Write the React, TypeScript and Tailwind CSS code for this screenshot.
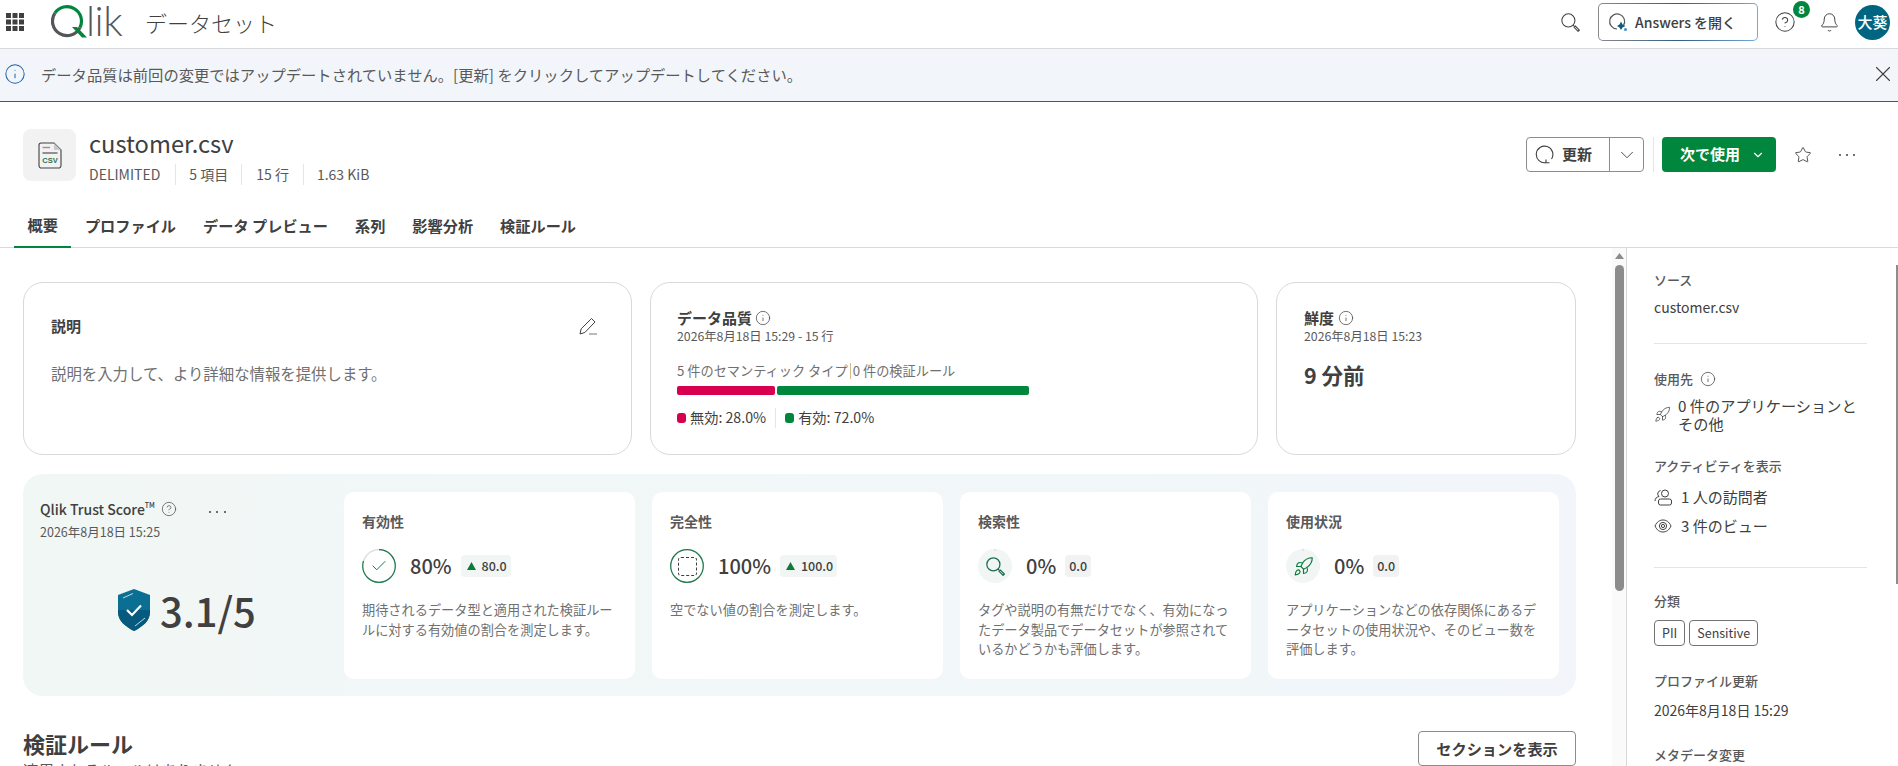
import { Bell, Check, ChevronDown, CircleHelp, Info, Rocket, Star, X } from 'lucide-react'

const tabs = ['概要', 'プロファイル', 'データ プレビュー', '系列', '影響分析', '検証ルール']

const metrics = [
  {
    title: '有効性',
    value: '80%',
    delta: '80.0',
    up: true,
    icon: 'check',
    desc: '期待されるデータ型と適用された検証ルールに対する有効値の割合を測定します。',
  },
  {
    title: '完全性',
    value: '100%',
    delta: '100.0',
    up: true,
    icon: 'dash',
    desc: '空でない値の割合を測定します。',
  },
  {
    title: '検索性',
    value: '0%',
    delta: '0.0',
    up: false,
    icon: 'search',
    desc: 'タグや説明の有無だけでなく、有効になったデータ製品でデータセットが参照されているかどうかも評価します。',
  },
  {
    title: '使用状況',
    value: '0%',
    delta: '0.0',
    up: false,
    icon: 'rocket',
    desc: 'アプリケーションなどの依存関係にあるデータセットの使用状況や、そのビュー数を評価します。',
  },
]

function GridIcon() {
  return (
    <svg width="18" height="18" viewBox="0 0 18 18" fill="#404040">
      <rect x="0" y="0" width="5" height="5" />
      <rect x="6.5" y="0" width="5" height="5" />
      <rect x="13" y="0" width="5" height="5" />
      <rect x="0" y="6.5" width="5" height="5" />
      <rect x="6.5" y="6.5" width="5" height="5" />
      <rect x="13" y="6.5" width="5" height="5" />
      <rect x="0" y="13" width="5" height="5" />
      <rect x="6.5" y="13" width="5" height="5" />
      <rect x="13" y="13" width="5" height="5" />
    </svg>
  )
}

function QlikLogo() {
  return (
    <svg width="76" height="33" viewBox="0 0 76 33" fill="none" className="-mt-[2px]">
      <path d="M3.9 8.1 A14.5 14.5 0 0 1 29 22.5" stroke="#00873d" strokeWidth="3.2" />
      <path d="M3.9 8.1 A14.5 14.5 0 1 0 29 22.5" stroke="#54565a" strokeWidth="3.2" />
      <path d="M21 22 L31 32.5 L36 32.5 L26 22 Z" fill="#00873d" />
      <text x="35" y="30.5" fontSize="41" fontWeight="300" letterSpacing="-0.5" fill="#54565a" fontFamily="Lato, sans-serif">lik</text>
    </svg>
  )
}

function SearchGlyph({ size, color, width }: { size: number; color: string; width: number }) {
  return (
    <svg width={size} height={size} viewBox="0 0 18 18" fill="none" stroke={color} strokeWidth={width}>
      <circle cx="7" cy="7" r="6.2" />
      <path d="M11.5 11.5 L12.6 12.6" />
      <path d="M12.4 13.6 L13.6 12.4 L17.4 16.2 L16.2 17.4 Z" />
    </svg>
  )
}

function AnswersIcon() {
  return (
    <svg width="20" height="20" viewBox="0 0 20 20" fill="none">
      <path d="M15.5 13.5 A7.5 7.5 0 1 0 9 17" stroke="#595959" strokeWidth="1.2" />
      <path d="M13 9.5 L14.5 12.5 L17.5 14 L14.5 15.5 L13 18 L11.5 15.5 L9 14 L11.5 12.5 Z" fill="#0f5c7a" />
      <circle cx="17.5" cy="17.5" r="1.5" fill="#3d8fd1" />
    </svg>
  )
}

function RefreshIcon() {
  return (
    <svg width="19" height="19" viewBox="0 0 19 19" fill="none" stroke="#404040" strokeWidth="1.1">
      <path d="M11 17.6 A8.3 8.3 0 1 1 16.5 14" />
      <path d="M11 14.5 L11 17.8 L14.5 17.8" />
    </svg>
  )
}

function CsvIcon() {
  return (
    <svg width="24" height="27" viewBox="0 0 24 27" fill="none">
      <path d="M3 1 H16 L23 8 V23.5 A2.5 2.5 0 0 1 20.5 26 H3.5 A2.5 2.5 0 0 1 1 23.5 V3 A2 2 0 0 1 3 1 Z" stroke="#404040" strokeWidth="1.1" />
      <path d="M16 1 V8 H23 Z" fill="#c8c8c8" />
      <path d="M4.5 5.5 H12" stroke="#a08a96" strokeWidth="1.4" />
      <path d="M4.5 11 H19.5" stroke="#404040" strokeWidth="1.1" />
      <text x="12" y="21" textAnchor="middle" fontSize="7.5" fontWeight="700" fill="#2f6f55" fontFamily="'Liberation Sans', sans-serif">CSV</text>
    </svg>
  )
}

function PencilIcon() {
  return (
    <svg width="18" height="18" viewBox="0 0 18 18" fill="none" stroke="#404040" strokeWidth="1">
      <path d="M1 17 L2.2 11.8 L12.5 1.5 L16 5 L5.8 15.5 Z" />
      <path d="M10 17 H18" stroke="#8c8c8c" strokeWidth="1.2" />
    </svg>
  )
}

function Shield() {
  return (
    <svg width="32" height="42" viewBox="0 0 32 42">
      <path d="M16 0 L32 6 V23 C32 32 24 38 16 42 C8 38 0 32 0 23 V6 Z" fill="#0a6f93" />
      <path d="M0 21 H32 V23 C32 32 24 38 16 42 C8 38 0 32 0 23 Z" fill="#075a7d" />
      <path d="M9 21 L14 26 L23 16.5" stroke="#fff" strokeWidth="2.2" fill="none" />
      <path d="M5 9 L15 4.5" stroke="#b9dbe7" strokeWidth="1" />
      <path d="M17 37 L27 29" stroke="#b9dbe7" strokeWidth="1" />
    </svg>
  )
}

function MetricIcon({ kind, value }: { kind: string; value: string }) {
  const pct = parseInt(value)
  return (
    <div className="relative w-[34px] h-[34px] shrink-0">
      <svg width="34" height="34" viewBox="0 0 34 34" fill="none" className="absolute inset-0">
        {pct === 0 ? (
          <>
            <circle cx="17" cy="17" r="17" fill="#f1f5f4" />
            <path d="M17 0 V2" stroke="#bdbdbd" strokeWidth="0.6" />
          </>
        ) : (
          <>
            <circle cx="17" cy="17" r="16.3" stroke="#d5dedb" strokeWidth="1.2" />
            <circle
              cx="17"
              cy="17"
              r="16.3"
              stroke="#1c7a4c"
              strokeWidth="1.2"
              pathLength={100}
              strokeDasharray={`${pct} ${100 - pct}`}
              transform="rotate(-90 17 17)"
            />
          </>
        )}
      </svg>
      <div className="absolute inset-0 flex items-center justify-center">
        {kind === 'check' && <Check size={18} strokeWidth={1.3} color="#0b7a3a" />}
        {kind === 'dash' && <div className="w-[19px] h-[19px] rounded-[3px] border border-dashed border-[#404040]" />}
        {kind === 'search' && <SearchGlyph size={19} color="#1c6b52" width={1.2} />}
        {kind === 'rocket' && <Rocket size={21} strokeWidth={1.3} color="#0b7a3a" />}
      </div>
    </div>
  )
}

function MetricCard({ m }: { m: (typeof metrics)[number] }) {
  return (
    <div className="w-[291px] h-[187px] bg-white rounded-[10px] pt-[19px] px-[18px]">
      <div className="text-[14px] leading-5 font-bold text-[#595959]">{m.title}</div>
      <div className="flex items-center mt-[18px] h-[34px]">
        <MetricIcon kind={m.icon} value={m.value} />
        <span className="ml-[14px] text-[20px] leading-7 font-medium text-[#404040]">{m.value}</span>
        <span className={`ml-[9px] h-[22px] rounded-[4px] flex items-center gap-[6px] text-[12.5px] font-medium text-[#404040] ${m.up ? 'bg-[#f1f5f4] pl-[6px] pr-[4px]' : 'bg-[#f2f2f2] px-[4px]'}`}>
          {m.up && (
            <svg width="9" height="8" viewBox="0 0 9 8">
              <path d="M4.5 0 L9 8 H0 Z" fill="#0b7a3a" />
            </svg>
          )}
          {m.delta}
        </span>
      </div>
      <p className="mt-[17px] text-[13.2px] leading-[19.5px] text-[#707070]">{m.desc}</p>
    </div>
  )
}

function VisitorIcon() {
  return (
    <svg width="18" height="18" viewBox="0 0 18 18" fill="none" stroke="#404040" strokeWidth="1">
      <circle cx="11" cy="5.5" r="3.5" />
      <path d="M6.5 2.5 A3.4 3.4 0 0 0 5 8.5 C2.5 9 1 10.5 1 13" />
      <rect x="4.5" y="11" width="13" height="6" rx="2" />
    </svg>
  )
}

function ViewIcon() {
  return (
    <svg width="18" height="18" viewBox="0 0 18 18" fill="none" stroke="#404040" strokeWidth="1">
      <path d="M1 9 C3 4.5 6 3 9 3 C12 3 15 4.5 17 9 C15 13.5 12 15 9 15 C6 15 3 13.5 1 9 Z" />
      <circle cx="9" cy="9" r="3.6" />
      <circle cx="9" cy="9" r="1.6" />
    </svg>
  )
}

export default function App() {
  return (
    <div className="h-screen w-full overflow-hidden flex flex-col bg-white text-[#404040] font-['Noto_Sans_CJK_JP','Noto_Sans',sans-serif]">
      <header className="h-[49px] shrink-0 border-b border-[#d9d9d9] flex items-center pl-[6px] pr-[8px] pb-[4px]">
        <GridIcon />
        <div className="ml-[27px]">
          <QlikLogo />
        </div>
        <span className="ml-[18px] text-[22px] leading-7 text-[#404040] font-light">データセット</span>
        <div className="ml-auto flex items-center">
          <SearchGlyph size={19} color="#404040" width={1} />
          <div className="ml-[18px] w-[160px] h-[38px] p-px rounded-[5px] bg-linear-to-r from-[#8a8a8a] via-[#2f5f86] to-[#78a9d8]">
            <div className="w-full h-full bg-white rounded-[4px] flex items-center pl-[9px] gap-[7px]">
              <AnswersIcon />
              <span className="text-[14px] font-medium text-[#404040]">Answers を開く</span>
            </div>
          </div>
          <div className="relative ml-[16px]">
            <CircleHelp size={22} strokeWidth={1.1} color="#404040" />
            <span className="absolute -top-[10px] left-[19px] w-[17px] h-[17px] rounded-full bg-[#00873d] text-white text-[11px] font-bold flex items-center justify-center">8</span>
          </div>
          <Bell size={21} strokeWidth={1.1} color="#404040" className="ml-[23px]" />
          <div className="ml-[15px] w-[35px] h-[35px] rounded-full bg-[#006580] text-white text-[15px] font-medium flex items-center justify-center">大葵</div>
        </div>
      </header>

      <div className="h-[53px] shrink-0 bg-[#f2f6fb] border-b border-[#1a5fa8] flex items-center pl-[4px] pr-[8px] pb-[2px]">
        <Info size={22} strokeWidth={1.1} color="#1a5fa8" />
        <span className="ml-[15px] text-[15.3px] text-[#595959]">データ品質は前回の変更ではアップデートされていません。[更新] をクリックしてアップデートしてください。</span>
        <X size={26} strokeWidth={1} color="#404040" className="ml-auto -mr-[6px]" />
      </div>

      <div className="h-[107px] shrink-0 pl-[23px] pr-[43px] pt-[27px] flex">
        <div className="w-[53px] h-[52px] rounded-[8px] bg-[#f2f2f2] flex items-center justify-center">
          <CsvIcon />
        </div>
        <div className="ml-[13px] -mt-[2px]">
          <div className="text-[23.7px] leading-8 text-[#404040]">customer.csv</div>
          <div className="flex items-center mt-[4px] h-[22px] text-[14px] text-[#595959]">
            <span className="pr-[15px] border-r border-[#e5e5e5]">DELIMITED</span>
            <span className="px-[13px] border-r border-[#e5e5e5]">5 項目</span>
            <span className="px-[14px] border-r border-[#e5e5e5]">15 行</span>
            <span className="pl-[13px]">1.63 KiB</span>
          </div>
        </div>
        <div className="ml-auto flex items-center h-[35px] mt-[8px]">
          <div className="flex h-[35px] w-[118px] rounded-[4px] border border-[#8c8c8c]">
            <div className="w-[83px] border-r border-[#8c8c8c] flex items-center pl-[8px] gap-[8px]">
              <RefreshIcon />
              <span className="text-[15px] font-bold text-[#404040]">更新</span>
            </div>
            <div className="flex-1 flex items-center justify-center">
              <ChevronDown size={22} strokeWidth={1} color="#404040" />
            </div>
          </div>
          <div className="w-px h-[35px] bg-[#e5e5e5] ml-[9px]" />
          <div className="ml-[8px] w-[114px] h-[35px] rounded-[4px] bg-[#00873d] text-white flex items-center pl-[18px]">
            <span className="text-[15px] font-bold">次で使用</span>
            <ChevronDown size={14} strokeWidth={2} color="#fff" className="ml-[11px]" />
          </div>
          <Star size={18} strokeWidth={1.2} color="#404040" className="ml-[18px]" />
          <span className="ml-[27px] w-[16px] flex justify-between">
            <i className="w-[2px] h-[2px] rounded-full bg-[#404040]" />
            <i className="w-[2px] h-[2px] rounded-full bg-[#404040]" />
            <i className="w-[2px] h-[2px] rounded-full bg-[#404040]" />
          </span>
        </div>
      </div>

      <nav className="h-[39px] shrink-0 border-b-[1.5px] border-[#d9d9d9] flex pl-[14px]">
        {tabs.map((t, i) => (
          <div key={t} className={`h-[39px] px-[13.5px] pb-[7px] flex items-center text-[15.2px] font-bold text-[#404040] ${i === 0 ? 'border-b-2 border-[#00873d]' : ''}`}>
            {t}
          </div>
        ))}
      </nav>

      <div className="flex flex-1 min-h-0">
        <main className="w-[1612px] shrink-0 pl-[23px] pr-[36px] pt-[34px] overflow-hidden">
          <div className="flex gap-[18px] h-[173px]">
            <section className="w-[609px] rounded-[20px] border border-[#d9d9d9] pl-[27px] pr-[34px] pt-[33px]">
              <div className="flex items-center justify-between h-[20px]">
                <h3 className="text-[15px] font-bold text-[#404040]">説明</h3>
                <PencilIcon />
              </div>
              <p className="mt-[26px] text-[15.4px] leading-[22px] text-[#707070]">説明を入力して、より詳細な情報を提供します。</p>
            </section>

            <section className="w-[608px] rounded-[20px] border border-[#d9d9d9] pl-[26px] pt-[24px]">
              <div className="flex items-center gap-[3px] h-[22px]">
                <h3 className="text-[15px] font-bold text-[#404040]">データ品質</h3>
                <Info size={16} strokeWidth={1.1} color="#404040" />
              </div>
              <div className="text-[12.3px] leading-[16px] text-[#595959] -mt-[1px]">2026年8月18日 15:29 - 15 行</div>
              <div className="mt-[17px] h-[20px] flex items-center text-[13.2px] text-[#707070]">
                <span>5 件のセマンティック タイプ</span>
                <span className="mx-[2px] w-px h-[16px] bg-[#d8b98a]" />
                <span>0 件の検証ルール</span>
              </div>
              <div className="mt-[5px] flex gap-[2px] w-[352px]">
                <div className="w-[98px] h-[9px] rounded-[2px] bg-[#d8004e]" />
                <div className="w-[252px] h-[9px] rounded-[2px] bg-[#00873d]" />
              </div>
              <div className="mt-[13px] flex items-center h-[20px] text-[14.2px] text-[#404040]">
                <span className="w-[9px] h-[10px] rounded-[3px] bg-[#d8004e]" />
                <span className="ml-[4px]">無効: 28.0%</span>
                <span className="mx-[9px] w-px h-[20px] bg-[#e5e5e5]" />
                <span className="w-[9px] h-[10px] rounded-[3px] bg-[#00873d]" />
                <span className="ml-[4px]">有効: 72.0%</span>
              </div>
            </section>

            <section className="w-[300px] rounded-[20px] border border-[#d9d9d9] pl-[27px] pt-[24px]">
              <div className="flex items-center gap-[4px] h-[22px]">
                <h3 className="text-[15px] font-bold text-[#404040]">鮮度</h3>
                <Info size={16} strokeWidth={1.1} color="#404040" />
              </div>
              <div className="text-[12.3px] leading-[16px] text-[#595959] -mt-[1px]">2026年8月18日 15:23</div>
              <div className="mt-[15px] text-[21.5px] leading-8 font-bold text-[#404040]">9 分前</div>
            </section>
          </div>

          <section className="mt-[19px] h-[222px] rounded-[20px] bg-linear-to-r from-[#f1f7f5] to-[#f2f6fb] flex pr-[17px] pt-[18px]">
            <div className="w-[321px] shrink-0 pl-[17px] pt-[6px]">
              <div className="flex items-center h-[22px]">
                <span className="text-[14px] font-medium text-[#404040]">Qlik Trust Score</span>
                <sup className="text-[7px] font-medium text-[#404040] -top-[4px]">TM</sup>
                <CircleHelp size={16} strokeWidth={1} color="#404040" className="ml-[6px]" />
                <span className="ml-[32px] mt-[6px] w-[17px] flex justify-between">
                  <i className="w-[2px] h-[2px] rounded-full bg-[#404040]" />
                  <i className="w-[2px] h-[2px] rounded-full bg-[#404040]" />
                  <i className="w-[2px] h-[2px] rounded-full bg-[#404040]" />
                </span>
              </div>
              <div className="mt-[3px] text-[12.5px] leading-[18px] text-[#595959]">2026年8月18日 15:25</div>
              <div className="mt-[47px] ml-[78px] flex items-center gap-[10px]">
                <Shield />
                <span className="text-[40px] leading-[44px] font-medium text-[#404040]">3.1/5</span>
              </div>
            </div>
            <div className="flex gap-[17px]">
              {metrics.map(m => (
                <MetricCard key={m.title} m={m} />
              ))}
            </div>
          </section>

          <div className="mt-[32px] flex justify-between">
            <div>
              <h2 className="text-[22px] leading-[30px] font-bold text-[#404040]">検証ルール</h2>
              <p className="mt-[2px] text-[15.4px] leading-[20px] text-[#595959]">適用されるルールはありません。</p>
            </div>
            <button className="mt-[3px] w-[158px] h-[35px] rounded-[4px] border border-[#8c8c8c] bg-white text-[15.2px] font-bold text-[#404040]">
              セクションを表示
            </button>
          </div>
        </main>

        <div className="w-[14px] shrink-0 bg-[#fafafa] flex flex-col items-center pt-[5px]">
          <svg width="9" height="6" viewBox="0 0 9 6">
            <path d="M4.5 0 L9 6 H0 Z" fill="#8c8c8c" />
          </svg>
          <div className="mt-[6px] w-[9px] h-[326px] rounded-full bg-[#8c8c8c]" />
        </div>

        <aside className="flex-1 min-w-0 border-l border-[#d9d9d9] pl-[27px] pr-[29px] pt-[23px] overflow-hidden">
          <h4 className="text-[13px] leading-[18px] font-medium text-[#595959]">ソース</h4>
          <div className="mt-[8px] text-[14px] leading-5 text-[#404040]">customer.csv</div>
          <div className="mt-[26px] h-px bg-[#e5e5e5]" />

          <div className="mt-[26px] flex items-center gap-[7px] h-[18px]">
            <h4 className="text-[13px] font-medium text-[#595959]">使用先</h4>
            <Info size={16} strokeWidth={1.1} color="#404040" />
          </div>
          <div className="mt-[8px] flex items-center gap-[7px]">
            <Rocket size={17} strokeWidth={1.1} color="#404040" className="shrink-0" />
            <span className="text-[15.2px] leading-[18px] text-[#404040]">0 件のアプリケーションとその他</span>
          </div>

          <h4 className="mt-[25px] text-[13px] leading-[18px] font-medium text-[#595959]">アクティビティを表示</h4>
          <div className="mt-[12px] flex items-center gap-[9px] h-[20px]">
            <VisitorIcon />
            <span className="text-[15px] text-[#404040]">1 人の訪問者</span>
          </div>
          <div className="mt-[9px] flex items-center gap-[9px] h-[20px]">
            <ViewIcon />
            <span className="text-[15px] text-[#404040]">3 件のビュー</span>
          </div>
          <div className="mt-[31px] h-px bg-[#e5e5e5]" />

          <h4 className="mt-[24px] text-[13px] leading-[18px] font-medium text-[#595959]">分類</h4>
          <div className="mt-[10px] flex gap-[4px]">
            <span className="h-[26px] px-[7px] rounded-[4px] border border-[#737373] text-[12.5px] flex items-center text-[#404040]">PII</span>
            <span className="h-[26px] px-[7px] rounded-[4px] border border-[#737373] text-[12.5px] flex items-center text-[#404040]">Sensitive</span>
          </div>

          <h4 className="mt-[26px] text-[13px] leading-[18px] font-medium text-[#595959]">プロファイル更新</h4>
          <div className="mt-[10px] text-[14px] leading-5 text-[#404040]">2026年8月18日 15:29</div>
          <h4 className="mt-[26px] text-[13px] leading-[18px] font-medium text-[#595959]">メタデータ変更</h4>
        </aside>

        <div className="w-[2px] shrink-0 pt-[17px]">
          <div className="w-[2px] h-[319px] bg-[#8c8c8c]" />
        </div>
      </div>
    </div>
  )
}
